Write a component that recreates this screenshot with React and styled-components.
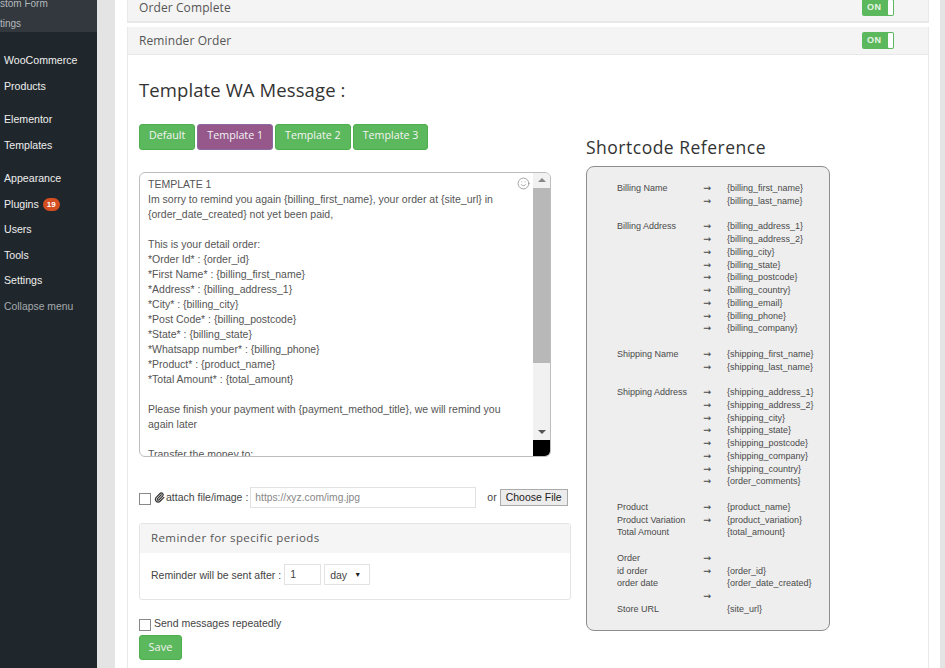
import React from 'react';
import styled, { createGlobalStyle } from 'styled-components';
import { Smile, Paperclip } from 'lucide-react';

const GlobalStyle = createGlobalStyle`
  html, body { margin: 0; padding: 0; height: 100%; overflow: hidden; background: #e4e4e4; }
  body { font-family: "Liberation Sans", Arial, sans-serif; color: #444; }
  * { box-sizing: border-box; }
`;

const HEADING = '"Open Sans", "Noto Sans", sans-serif';

const menuGroups = [
  [{ label: 'WooCommerce' }, { label: 'Products' }],
  [{ label: 'Elementor' }, { label: 'Templates' }],
  [
    { label: 'Appearance' },
    { label: 'Plugins', badge: 19 },
    { label: 'Users' },
    { label: 'Tools' },
    { label: 'Settings' },
  ],
];

const message = `TEMPLATE 1
Im sorry to remind you again {billing_first_name}, your order at {site_url} in {order_date_created} not yet been paid,

This is your detail order:
*Order Id* : {order_id}
*First Name* : {billing_first_name}
*Address* : {billing_address_1}
*City* : {billing_city}
*Post Code* : {billing_postcode}
*State* : {billing_state}
*Whatsapp number* : {billing_phone}
*Product* : {product_name}
*Total Amount* : {total_amount}

Please finish your payment with {payment_method_title}, we will remind you again later

Transfer the money to:`;

// label, arrow, code -- one row of the reference table
const shortcodes = [
  ['Billing Name', true, '{billing_first_name}'],
  ['', true, '{billing_last_name}'],
  null,
  ['Billing Address', true, '{billing_address_1}'],
  ['', true, '{billing_address_2}'],
  ['', true, '{billing_city}'],
  ['', true, '{billing_state}'],
  ['', true, '{billing_postcode}'],
  ['', true, '{billing_country}'],
  ['', true, '{billing_email}'],
  ['', true, '{billing_phone}'],
  ['', true, '{billing_company}'],
  null,
  ['Shipping Name', true, '{shipping_first_name}'],
  ['', true, '{shipping_last_name}'],
  null,
  ['Shipping Address', true, '{shipping_address_1}'],
  ['', true, '{shipping_address_2}'],
  ['', true, '{shipping_city}'],
  ['', true, '{shipping_state}'],
  ['', true, '{shipping_postcode}'],
  ['', true, '{shipping_company}'],
  ['', true, '{shipping_country}'],
  ['', true, '{order_comments}'],
  null,
  ['Product', true, '{product_name}'],
  ['Product Variation', true, '{product_variation}'],
  ['Total Amount', false, '{total_amount}'],
  null,
  ['Order', true, ''],
  ['id order', true, '{order_id}'],
  ['order date', false, '{order_date_created}'],
  ['', true, ''],
  ['Store URL', false, '{site_url}'],
];

export default function App() {
  return (
    <Page>
      <GlobalStyle />
      <SideBar>
        <SubMenu>
          <SubItem>stom Form</SubItem>
          <SubItem>tings</SubItem>
        </SubMenu>
        {menuGroups.map((group, i) => (
          <MenuGroup key={i}>
            {group.map(item => (
              <MenuItem key={item.label}>
                {item.label}
                {item.badge && <Badge>{item.badge}</Badge>}
              </MenuItem>
            ))}
          </MenuGroup>
        ))}
        <Collapse>Collapse menu</Collapse>
      </SideBar>
      <Main>
        <Sheet>
          <Panel>
            <PanelBar $height={22} $clipped>
              <BarTitle>Order Complete</BarTitle>
              <Toggle />
            </PanelBar>
          </Panel>
          <Panel>
            <PanelBar $height={28}>
              <BarTitle>Reminder Order</BarTitle>
              <Toggle />
            </PanelBar>
            <PanelBody>
              <LeftColumn>
                <Heading>Template WA Message :</Heading>
                <TemplateTabs>
                  <TabButton>Default</TabButton>
                  <TabButton $active>Template 1</TabButton>
                  <TabButton>Template 2</TabButton>
                  <TabButton>Template 3</TabButton>
                </TemplateTabs>
                <MessageBox>
                  <MessageText>{message}</MessageText>
                  <EmojiIcon size={13} strokeWidth={1.4} />
                  <ScrollRail>
                    <ScrollArrow $up />
                    <ScrollThumb />
                    <ScrollArrow />
                    <ScrollCorner />
                  </ScrollRail>
                </MessageBox>
                <AttachRow>
                  <CheckBox />
                  <Paperclip size={11} strokeWidth={2.6} color="#333" />
                  <AttachLabel>attach file/image :</AttachLabel>
                  <UrlInput>https://xyz.com/img.jpg</UrlInput>
                  <OrLabel>or</OrLabel>
                  <FileButton>Choose File</FileButton>
                </AttachRow>
                <PeriodPanel>
                  <PeriodTitle>Reminder for specific periods</PeriodTitle>
                  <PeriodBody>
                    <span>Reminder will be sent after :</span>
                    <NumberBox>1</NumberBox>
                    <SelectBox>
                      day<SelectCaret>▼</SelectCaret>
                    </SelectBox>
                  </PeriodBody>
                </PeriodPanel>
                <RepeatRow>
                  <CheckBox />
                  <RepeatLabel>Send messages repeatedly</RepeatLabel>
                </RepeatRow>
                <SaveButton>Save</SaveButton>
              </LeftColumn>
              <RightColumn>
                <RefHeading>Shortcode Reference</RefHeading>
                <RefCard>
                  {shortcodes.map((row, i) =>
                    row ? (
                      <RefRow key={i}>
                        <span>{row[0]}</span>
                        <RefArrow>{row[1] ? '→' : ''}</RefArrow>
                        <span>{row[2]}</span>
                      </RefRow>
                    ) : (
                      <RefRow key={i} />
                    )
                  )}
                </RefCard>
              </RightColumn>
            </PanelBody>
          </Panel>
        </Sheet>
      </Main>
    </Page>
  );
}

const Page = styled.div`
  display: flex;
  width: 945px;
  height: 668px;
  overflow: hidden;
`;

const SideBar = styled.nav`
  width: 97px;
  flex: none;
  background: #20272c;
  color: #eee;
  font-size: 10.6px;
  overflow: hidden;
`;

const SubMenu = styled.div`
  height: 39px;
  margin-bottom: 16px;
  background: #32383d;
`;

const SubItem = styled.div`
  height: 20px;
  font-size: 10px;
  line-height: 20px;
  color: #b4b9be;
  white-space: nowrap;
  &:first-child { margin-top: -7px; height: 21px; line-height: 21px; }
`;

const MenuGroup = styled.div`
  padding-bottom: 8px;
`;

const MenuItem = styled.div`
  height: 25.5px;
  padding-left: 4px;
  line-height: 25.5px;
  white-space: nowrap;
`;

const Badge = styled.span`
  display: inline-block;
  width: 17px;
  height: 13px;
  margin-left: 4px;
  border-radius: 7px;
  background: #d54e21;
  color: #fff;
  font-size: 8px;
  font-weight: 700;
  line-height: 13px;
  text-align: center;
  vertical-align: 1px;
`;

const Collapse = styled.div`
  height: 25px;
  margin-top: -8px;
  padding-left: 4px;
  font-size: 10.4px;
  line-height: 25px;
  color: #a4a9ae;
  white-space: nowrap;
`;

const Main = styled.main`
  flex: 1;
  padding: 0 5px 0 18px;
  overflow: hidden;
`;

const Sheet = styled.div`
  height: 100%;
  padding: 0 11px 0 12px;
  background: #fff;
  overflow: hidden;
`;

const Panel = styled.section`
  margin-bottom: 4px;
  border: 1px solid #e9e9e9;
  border-top: 0;
  background: #fff;
`;

const PanelBar = styled.header`
  display: flex;
  align-items: center;
  justify-content: space-between;
  height: ${p => p.$height}px;
  padding: 0 34px ${p => (p.$clipped ? '6px' : '0')} 11px;
  background: #f4f4f4;
  border-bottom: 1px solid #e8e8e8;
`;

const BarTitle = styled.h3`
  margin: 0;
  font-family: ${HEADING};
  font-size: 12px;
  font-weight: 400;
  letter-spacing: 0.1px;
  color: #555;
`;

const Toggle = styled.div.attrs({ children: 'ON' })`
  position: relative;
  width: 32px;
  height: 17px;
  padding-left: 5px;
  border-radius: 2px;
  background: #5cb85c;
  color: #e6f5e6;
  font-size: 9px;
  font-weight: 700;
  line-height: 17px;
  letter-spacing: 0.4px;
  &::after {
    content: '';
    position: absolute;
    top: 1px;
    right: 1px;
    width: 5px;
    height: 15px;
    border-radius: 1px;
    background: #fff;
  }
`;

const PanelBody = styled.div`
  display: flex;
  gap: 15px;
  padding: 0 11px 40px;
`;

const LeftColumn = styled.div`
  width: 432px;
  flex: none;
`;

const Heading = styled.h2`
  margin: 0;
  padding-top: 23px;
  height: 69px;
  font-family: ${HEADING};
  font-size: 18.5px;
  font-weight: 400;
  line-height: 24px;
  letter-spacing: 0.1px;
  color: #333;
`;

const TemplateTabs = styled.div`
  display: flex;
  gap: 2px;
`;

const TabButton = styled.button`
  height: 26px;
  padding: 0 9px 4px;
  border: 1px solid ${p => (p.$active ? '#8a6aa0' : '#4cae4c')};
  border-radius: 3px;
  background: ${p => (p.$active ? '#96588a' : '#5cb85c')};
  color: #f4f4f4;
  font-family: ${HEADING};
  font-size: 10.7px;
`;

const MessageBox = styled.div`
  position: relative;
  display: flex;
  width: 412px;
  height: 285px;
  margin-top: 22px;
  border: 1px solid #bdbdbd;
  border-radius: 6px;
  overflow: hidden;
`;

const MessageText = styled.div`
  flex: 1;
  padding: 4px 18px 0 8px;
  overflow: hidden;
  font-size: 10.5px;
  line-height: 15px;
  color: #555;
  white-space: pre-wrap;
`;

const EmojiIcon = styled(Smile)`
  position: absolute;
  top: 4px;
  right: 20px;
  color: #888;
`;

const ScrollRail = styled.div`
  display: flex;
  flex-direction: column;
  align-items: stretch;
  width: 17px;
  flex: none;
  background: #f1f1f1;
`;

const ScrollArrow = styled.div`
  flex: none;
  height: 15px;
  position: relative;
  &::after {
    content: '';
    position: absolute;
    left: 5px;
    top: 5px;
    border-left: 4px solid transparent;
    border-right: 4px solid transparent;
    ${p => (p.$up ? 'border-bottom: 4px solid #888;' : 'border-top: 4px solid #555;')}
  }
`;

const ScrollThumb = styled.div`
  height: 175px;
  background: #b8b8b8;
  margin-bottom: 62px;
`;

const ScrollCorner = styled.div`
  flex: 1;
  background: #000;
`;

const AttachRow = styled.div`
  display: flex;
  align-items: center;
  height: 22px;
  margin-top: 29px;
  font-size: 10.5px;
  color: #444;
`;

const CheckBox = styled.span`
  display: block;
  width: 12px;
  height: 12px;
  margin: 3px 3px 0 0;
  flex: none;
  border: 1px solid #888;
  background: #fff;
`;

const AttachLabel = styled.span`
  margin: 0 2px 0 1px;
  white-space: nowrap;
`;

const UrlInput = styled.div`
  width: 226px;
  height: 21px;
  padding-left: 4px;
  border: 1px solid #e2e2e2;
  font-size: 10.3px;
  line-height: 19px;
  color: #888;
`;

const OrLabel = styled.span`
  margin-left: 11px;
`;

const FileButton = styled.div`
  width: 68px;
  height: 17px;
  margin-left: 3px;
  border: 1px solid #aaa;
  background: #ececec;
  color: #222;
  font-size: 10.5px;
  line-height: 15px;
  text-align: center;
  white-space: nowrap;
`;

const PeriodPanel = styled.div`
  height: 77px;
  margin-top: 15px;
  border: 1px solid #e4e4e4;
  border-radius: 3px;
`;

const PeriodTitle = styled.div`
  height: 29px;
  padding-left: 11px;
  background: #f5f5f5;
  font-family: ${HEADING};
  font-size: 11.5px;
  line-height: 27px;
  letter-spacing: 0.4px;
  color: #555;
`;

const PeriodBody = styled.div`
  display: flex;
  align-items: center;
  gap: 3px;
  padding: 11px 0 0 11px;
  font-size: 10.5px;
  color: #444;
`;

const NumberBox = styled.div`
  width: 37px;
  height: 21px;
  padding-left: 5px;
  border: 1px solid #e2e2e2;
  line-height: 19px;
`;

const SelectBox = styled.div`
  display: flex;
  justify-content: space-between;
  width: 46px;
  height: 21px;
  padding: 0 8px 0 5px;
  border: 1px solid #e2e2e2;
  line-height: 20px;
`;

const SelectCaret = styled.span`
  font-size: 7px;
  color: #222;
`;

const RepeatRow = styled.div`
  display: flex;
  height: 17px;
  margin-top: 16px;
  font-size: 10.5px;
`;

const RepeatLabel = styled.span`
  line-height: 14px;
`;

const SaveButton = styled.button`
  display: block;
  width: 43px;
  height: 25px;
  margin-top: 2px;
  padding: 0 0 2px;
  border: 1px solid #4cae4c;
  border-radius: 3px;
  background: #5cb85c;
  color: #f2f2f2;
  font-family: ${HEADING};
  font-size: 11px;
`;

const RightColumn = styled.div`
  width: 244px;
  flex: none;
  padding-top: 80px;
`;

const RefHeading = styled.h2`
  margin: 0 0 7px;
  font-family: ${HEADING};
  font-size: 17.5px;
  font-weight: 400;
  line-height: 24px;
  letter-spacing: 0.5px;
  color: #333;
`;

const RefCard = styled.div`
  height: 465px;
  padding: 15px 0 0 30px;
  border: 1px solid #8d8d8d;
  border-radius: 8px;
  background: #eeeeee;
`;

const RefRow = styled.div`
  display: grid;
  grid-template-columns: 86px 24px 1fr;
  height: 12.75px;
  font-size: 9px;
  line-height: 12.75px;
  color: #4a4a4a;
  white-space: nowrap;
`;

const RefArrow = styled.span`
  font-family: "DejaVu Sans", sans-serif;
  font-size: 9.5px;
`;
